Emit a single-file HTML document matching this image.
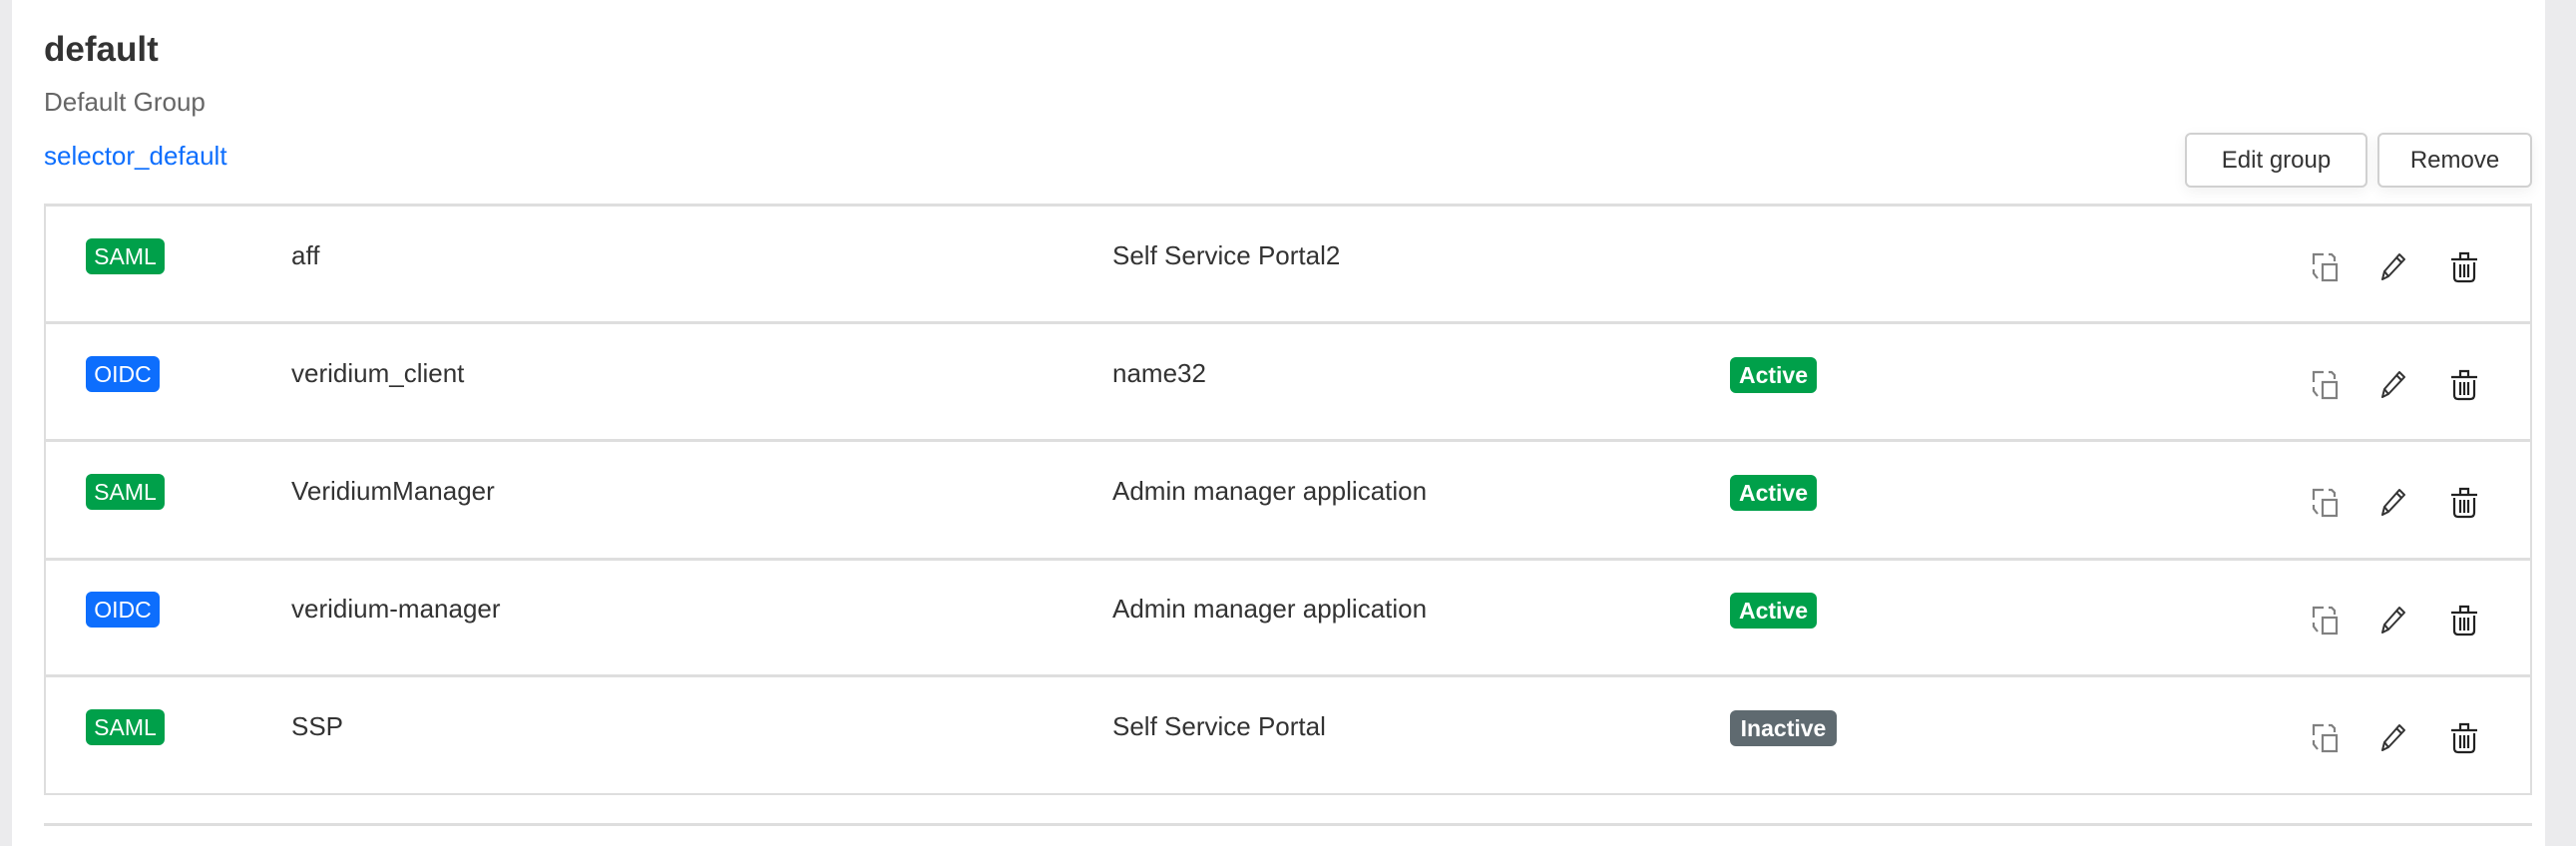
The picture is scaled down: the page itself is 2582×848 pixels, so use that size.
<!DOCTYPE html>
<html><head><meta charset="utf-8"><style>
*{margin:0;padding:0;box-sizing:border-box}
body{width:2582px;height:848px;background:#fff;position:relative;overflow:hidden;font-family:"Liberation Sans",sans-serif;color:#333}
.abs{position:absolute}
.lbar{left:0;top:0;width:12px;height:848px;background:#ebebed}
.rbar{left:2551px;top:0;width:31px;height:848px;background:#ebebed}
.title{left:44px;top:30px;font-size:35px;font-weight:bold;color:#333}
.sub{left:44px;top:87px;font-size:26px;color:#666}
.link{left:44px;top:141px;font-size:26px;color:#0d6efd}
.btn{top:133px;height:55px;border:2px solid #d0d0d0;border-radius:6px;background:#fff;font-size:24px;color:#333;display:flex;align-items:center;justify-content:center;box-shadow:0 4px 14px rgba(0,0,0,.06)}
.table{left:44px;top:204px;width:2494px;height:593px;border:2px solid #dedede;border-top:3px solid #dedede}
.row{left:44px;width:2494px;height:3px;background:#dedede}
.badge{height:36px;border-radius:6px;color:#fff;font-size:23px;display:flex;align-items:center;justify-content:center}
.saml{background:#00a04a;width:79px}
.oidc{background:#0d6efd;width:74px}
.st{height:36px;border-radius:6px;color:#fff;font-size:23px;font-weight:bold;display:flex;align-items:center;justify-content:center}
.txt{font-size:26px;color:#333}
svg{position:absolute;overflow:visible}
</style></head><body>
<div class="abs lbar"></div><div class="abs rbar"></div>
<div class="abs title">default</div>
<div class="abs sub">Default Group</div>
<div class="abs link">selector_default</div>
<div class="abs btn" style="left:2190px;width:183px">Edit group</div>
<div class="abs btn" style="left:2383px;width:155px">Remove</div>
<div class="abs table"></div>
<div class="abs row" style="top:322px"></div>
<div class="abs row" style="top:440px"></div>
<div class="abs row" style="top:559px"></div>
<div class="abs row" style="top:676px"></div>
<div class="abs row" style="top:825px"></div>

<div class="abs badge saml" style="left:86px;top:239px">SAML</div>
<div class="abs txt" style="left:292px;top:241px">aff</div>
<div class="abs txt" style="left:1115px;top:241px">Self Service Portal2</div>

<div class="abs badge oidc" style="left:86px;top:357px">OIDC</div>
<div class="abs txt" style="left:292px;top:359px">veridium_client</div>
<div class="abs txt" style="left:1115px;top:359px">name32</div>
<div class="abs st" style="left:1734px;top:358px;width:87px;background:#00a04a">Active</div>

<div class="abs badge saml" style="left:86px;top:475px">SAML</div>
<div class="abs txt" style="left:292px;top:477px">VeridiumManager</div>
<div class="abs txt" style="left:1115px;top:477px">Admin manager application</div>
<div class="abs st" style="left:1734px;top:476px;width:87px;background:#00a04a">Active</div>

<div class="abs badge oidc" style="left:86px;top:593px">OIDC</div>
<div class="abs txt" style="left:292px;top:595px">veridium-manager</div>
<div class="abs txt" style="left:1115px;top:595px">Admin manager application</div>
<div class="abs st" style="left:1734px;top:594px;width:87px;background:#00a04a">Active</div>

<div class="abs badge saml" style="left:86px;top:711px">SAML</div>
<div class="abs txt" style="left:292px;top:713px">SSP</div>
<div class="abs txt" style="left:1115px;top:713px">Self Service Portal</div>
<div class="abs st" style="left:1734px;top:712px;width:107px;background:#5f6a70">Inactive</div>

<!-- icons -->
<svg style="left:2317px;top:253px" width="28" height="30" viewBox="0 0 28 30"><g fill="none" stroke="#808080" stroke-width="2.2"><path d="M2 12V2h10"/><path d="M17 2h3l3 3v4"/><path d="M2 17v4l4 5"/><rect x="11" y="12" width="14" height="16"/></g></svg>
<svg style="left:2385px;top:252px" width="28" height="30" viewBox="0 0 28 30"><g fill="none" stroke="#333" stroke-width="2" stroke-linejoin="round"><path d="M3 28l2-8L20 3l5 5L9 25z"/><path d="M17 6l5 5"/><path d="M5 20l4 5"/></g></svg>
<svg style="left:2456px;top:252px" width="28" height="32" viewBox="0 0 28 32"><g fill="none" stroke="#222" stroke-width="2.2"><path d="M1 8h26"/><path d="M10 8V2h8v6"/><path d="M4 11v15q0 4 4 4h12q4 0 4-4V11"/><path d="M10 13v13M14 13v13M18 13v13"/></g></svg>

<svg style="left:2317px;top:371px" width="28" height="30" viewBox="0 0 28 30"><g fill="none" stroke="#808080" stroke-width="2.2"><path d="M2 12V2h10"/><path d="M17 2h3l3 3v4"/><path d="M2 17v4l4 5"/><rect x="11" y="12" width="14" height="16"/></g></svg>
<svg style="left:2385px;top:370px" width="28" height="30" viewBox="0 0 28 30"><g fill="none" stroke="#333" stroke-width="2" stroke-linejoin="round"><path d="M3 28l2-8L20 3l5 5L9 25z"/><path d="M17 6l5 5"/><path d="M5 20l4 5"/></g></svg>
<svg style="left:2456px;top:370px" width="28" height="32" viewBox="0 0 28 32"><g fill="none" stroke="#222" stroke-width="2.2"><path d="M1 8h26"/><path d="M10 8V2h8v6"/><path d="M4 11v15q0 4 4 4h12q4 0 4-4V11"/><path d="M10 13v13M14 13v13M18 13v13"/></g></svg>

<svg style="left:2317px;top:489px" width="28" height="30" viewBox="0 0 28 30"><g fill="none" stroke="#808080" stroke-width="2.2"><path d="M2 12V2h10"/><path d="M17 2h3l3 3v4"/><path d="M2 17v4l4 5"/><rect x="11" y="12" width="14" height="16"/></g></svg>
<svg style="left:2385px;top:488px" width="28" height="30" viewBox="0 0 28 30"><g fill="none" stroke="#333" stroke-width="2" stroke-linejoin="round"><path d="M3 28l2-8L20 3l5 5L9 25z"/><path d="M17 6l5 5"/><path d="M5 20l4 5"/></g></svg>
<svg style="left:2456px;top:488px" width="28" height="32" viewBox="0 0 28 32"><g fill="none" stroke="#222" stroke-width="2.2"><path d="M1 8h26"/><path d="M10 8V2h8v6"/><path d="M4 11v15q0 4 4 4h12q4 0 4-4V11"/><path d="M10 13v13M14 13v13M18 13v13"/></g></svg>

<svg style="left:2317px;top:607px" width="28" height="30" viewBox="0 0 28 30"><g fill="none" stroke="#808080" stroke-width="2.2"><path d="M2 12V2h10"/><path d="M17 2h3l3 3v4"/><path d="M2 17v4l4 5"/><rect x="11" y="12" width="14" height="16"/></g></svg>
<svg style="left:2385px;top:606px" width="28" height="30" viewBox="0 0 28 30"><g fill="none" stroke="#333" stroke-width="2" stroke-linejoin="round"><path d="M3 28l2-8L20 3l5 5L9 25z"/><path d="M17 6l5 5"/><path d="M5 20l4 5"/></g></svg>
<svg style="left:2456px;top:606px" width="28" height="32" viewBox="0 0 28 32"><g fill="none" stroke="#222" stroke-width="2.2"><path d="M1 8h26"/><path d="M10 8V2h8v6"/><path d="M4 11v15q0 4 4 4h12q4 0 4-4V11"/><path d="M10 13v13M14 13v13M18 13v13"/></g></svg>

<svg style="left:2317px;top:725px" width="28" height="30" viewBox="0 0 28 30"><g fill="none" stroke="#808080" stroke-width="2.2"><path d="M2 12V2h10"/><path d="M17 2h3l3 3v4"/><path d="M2 17v4l4 5"/><rect x="11" y="12" width="14" height="16"/></g></svg>
<svg style="left:2385px;top:724px" width="28" height="30" viewBox="0 0 28 30"><g fill="none" stroke="#333" stroke-width="2" stroke-linejoin="round"><path d="M3 28l2-8L20 3l5 5L9 25z"/><path d="M17 6l5 5"/><path d="M5 20l4 5"/></g></svg>
<svg style="left:2456px;top:724px" width="28" height="32" viewBox="0 0 28 32"><g fill="none" stroke="#222" stroke-width="2.2"><path d="M1 8h26"/><path d="M10 8V2h8v6"/><path d="M4 11v15q0 4 4 4h12q4 0 4-4V11"/><path d="M10 13v13M14 13v13M18 13v13"/></g></svg>
</body></html>
